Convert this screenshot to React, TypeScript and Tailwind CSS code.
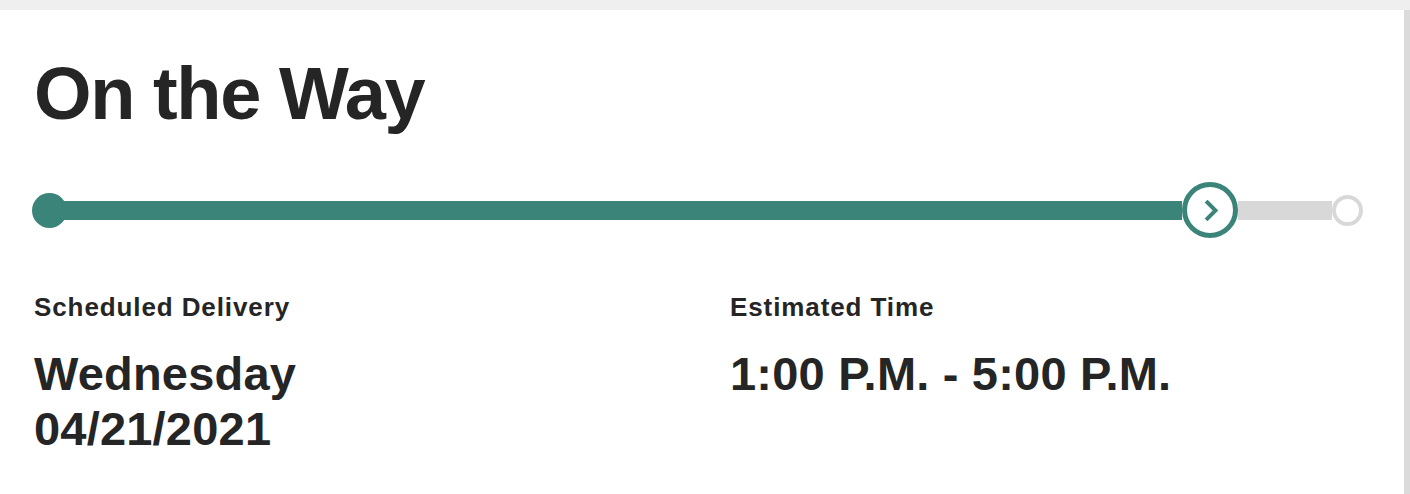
const TEAL = "bg-[#3a8479]";

const ProgressTrack = () => {
    return (
        <div className="flex items-center -ml-[2px] w-[1331px]">
            <div className={`w-[35px] h-[35px] rounded-full ${TEAL} shrink-0`} />
            <div className={`flex-1 h-[19px] ${TEAL} -ml-[4px]`} />
            <div className="w-[56px] h-[56px] rounded-full border-[5px] border-[#3a8479] bg-white shrink-0 flex items-center justify-center">
                <svg width="23" height="23" viewBox="0 0 20 20" fill="none" className="ml-[2px]">
                    <path d="M6.5 3 L13.5 10 L6.5 17" stroke="#3a8479" strokeWidth="3.4" strokeLinecap="square" strokeLinejoin="miter" />
                </svg>
            </div>
            <div className="w-[94px] h-[19px] bg-[#d8d8d8] shrink-0" />
            <div className="w-[31px] h-[31px] rounded-full border-[4px] border-[#d8d8d8] bg-white shrink-0" />
        </div>
    );
};

const InfoBlock = ({ label, lines, width }: { label: string; lines: string[]; width?: string }) => (
    <div className={width}>
        <div className="text-[26px] leading-[26px] font-bold tracking-[0.9px]">{label}</div>
        <div className="mt-[26px] text-[47px] leading-[55px] font-bold tracking-[0.2px]">
            {lines.map((l) => (
                <div key={l}>{l}</div>
            ))}
        </div>
    </div>
);

export default function App() {
    return (
        <div className="w-[1410px] h-[494px] bg-[#efefef] pt-[10px] pr-[6px] overflow-hidden" style={{ fontFamily: '"Liberation Sans", Arial, sans-serif' }}>
            <div className="h-full bg-white shadow-[6px_0_0_#dbdbdb] pl-[34px] pt-[47px] text-[#252525]">
                <h1 className="text-[74px] leading-[74px] font-bold tracking-[-1.4px]">On the Way</h1>

                <div className="mt-[51px]">
                    <ProgressTrack />
                </div>

                <div className="flex mt-[56px]">
                    <InfoBlock label="Scheduled Delivery" lines={["Wednesday", "04/21/2021"]} width="w-[696px]" />
                    <InfoBlock label="Estimated Time" lines={["1:00 P.M. - 5:00 P.M."]} />
                </div>
            </div>
        </div>
    );
}
